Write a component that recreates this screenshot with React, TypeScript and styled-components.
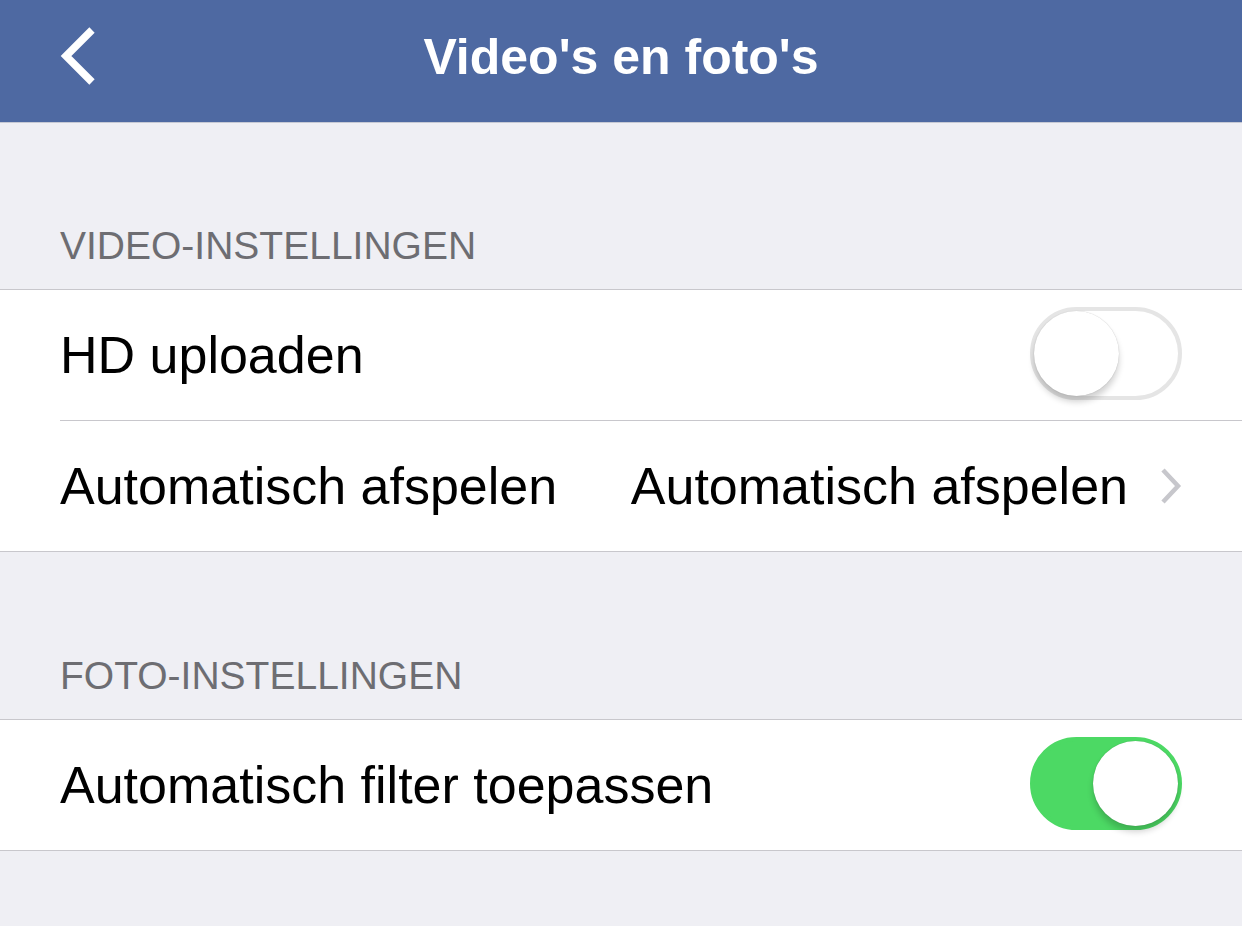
import React from "react";
import styled, { createGlobalStyle } from "styled-components";

const Global = createGlobalStyle`
  html, body { margin: 0; padding: 0; background: #efeff4; }
  body { font-family: "Liberation Sans", Arial, sans-serif; }
`;

const Page = styled.div`
  width: 1242px;
  height: 926px;
  background: #efeff4;
  overflow: hidden;
`;

const NavBar = styled.header`
  height: 122px;
  background: #4e69a2;
  display: flex;
  align-items: center;
  justify-content: center;
  position: relative;
  border-bottom: 1px solid #c6c9d4;
`;

const BackButton = styled.div`
  position: absolute;
  left: 56px;
  top: 26px;
  width: 44px;
  height: 60px;
`;

const Title = styled.h1`
  margin: 0 0 8px 0;
  color: #fff;
  font-size: 50px;
  font-weight: bold;
`;

const SectionHeader = styled.div<{ $top: number }>`
  padding: ${(p) => p.$top}px 0 20px 60px;
  color: #6d6d72;
  font-size: 39px;
  line-height: 46px;
`;

const Group = styled.div`
  background: #fff;
  border-top: 1px solid #c8c7cc;
  border-bottom: 1px solid #c8c7cc;
`;

const Row = styled.div<{ $last?: boolean }>`
  height: 130px;
  margin-left: 60px;
  padding-right: 60px;
  display: flex;
  align-items: center;
  border-bottom: ${(p) => (p.$last ? "none" : "1px solid #c8c7cc")};
  font-size: 52px;
  color: #000;
`;

const Label = styled.span`
  flex: 1;
`;

const Value = styled.span`
  color: #000;
  margin-right: 32px;
`;

const Toggle = styled.div<{ $on: boolean }>`
  width: 152px;
  height: 93px;
  margin-top: -4px;
  border-radius: 47px;
  box-sizing: border-box;
  position: relative;
  background: ${(p) => (p.$on ? "#4cd964" : "#fff")};
  border: 4px solid ${(p) => (p.$on ? "#4cd964" : "#e5e5e5")};
`;

const Knob = styled.div<{ $on: boolean }>`
  position: absolute;
  top: 0px;
  left: ${(p) => (p.$on ? "59px" : "0px")};
  width: 85px;
  height: 85px;
  border-radius: 50%;
  background: #fff;
  box-shadow: 0 6px 6px rgba(0, 0, 0, 0.18), 0 0 1px rgba(0, 0, 0, 0.25);
`;

export default function App() {
  return (
    <Page>
      <Global />
      <NavBar>
        <BackButton>
          <svg width="44" height="60" viewBox="0 0 44 60">
            <polyline points="36,4 10,30 36,56" fill="none" stroke="#fff" strokeWidth="7.5" />
          </svg>
        </BackButton>
        <Title>Video's en foto's</Title>
      </NavBar>
      <SectionHeader $top={100}>VIDEO-INSTELLINGEN</SectionHeader>
      <Group>
        <Row>
          <Label>HD uploaden</Label>
          <Toggle $on={false}><Knob $on={false} /></Toggle>
        </Row>
        <Row $last>
          <Label>Automatisch afspelen</Label>
          <Value>Automatisch afspelen</Value>
          <svg width="22" height="38" viewBox="0 0 22 38">
            <polyline points="3,3 18,19 3,35" fill="none" stroke="#c7c7cc" strokeWidth="4.5" />
          </svg>
        </Row>
      </Group>
      <SectionHeader $top={101}>FOTO-INSTELLINGEN</SectionHeader>
      <Group>
        <Row $last>
          <Label>Automatisch filter toepassen</Label>
          <Toggle $on={true}><Knob $on={true} /></Toggle>
        </Row>
      </Group>
    </Page>
  );
}
